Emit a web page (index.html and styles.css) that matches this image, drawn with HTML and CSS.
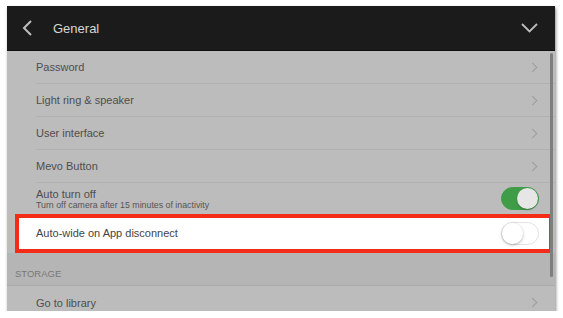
FILE: index.html
```html
<!DOCTYPE html>
<html lang="en">

<head>
    <meta charset="UTF-8">
    <meta name="viewport" content="width=device-width, initial-scale=1.0">
    <title>General - Settings</title>
    <link rel="stylesheet" href="styles.css">
</head>

<body>
    <div class="frame">
        <header class="topbar">
            <svg class="back" width="11" height="16" viewBox="0 0 11 16">
                <path d="M9 1 L2 8 L9 15" fill="none" stroke="#bdbdbd" stroke-width="2" />
            </svg>
            <h1>General</h1>
            <svg class="collapse" width="17" height="10" viewBox="0 0 17 10">
                <path d="M1 1 L8.5 8.5 L16 1" fill="none" stroke="#bdbdbd" stroke-width="1.8" />
            </svg>
        </header>

        <ul class="settings">
            <li class="row">
                <span class="label">Password</span>
                <span class="chevron"></span>
            </li>
            <li class="row">
                <span class="label">Light ring &amp; speaker</span>
                <span class="chevron"></span>
            </li>
            <li class="row">
                <span class="label">User interface</span>
                <span class="chevron"></span>
            </li>
            <li class="row">
                <span class="label">Mevo Button</span>
                <span class="chevron"></span>
            </li>
            <li class="row row-tall">
                <div class="text">
                    <span class="label">Auto turn off</span>
                    <span class="hint">Turn off camera after 15 minutes of inactivity</span>
                </div>
                <span class="toggle on"></span>
            </li>
            <li class="row row-marked">
                <span class="label">Auto-wide on App disconnect</span>
                <span class="toggle"></span>
            </li>
            <li class="section">STORAGE</li>
            <li class="row row-last">
                <span class="label">Go to library</span>
                <span class="chevron"></span>
            </li>
        </ul>

        <div class="scrollbar"></div>
    </div>
</body>

</html>
```

FILE: styles.css
```css
body {
    font-family: "Liberation Sans", Arial, sans-serif;
    background-color: #fff;
    margin: 0;
    padding: 0;
}

.frame {
    position: relative;
    width: 548px;
    height: 305px;
    margin: 6px 0 0 7px;
    background-color: #bcbcbc;
    overflow: hidden;
    box-shadow: 1px 2px 3px rgba(0, 0, 0, 0.45);
}

.topbar {
    display: flex;
    align-items: center;
    height: 44px;
    padding: 0 17px 0 15px;
    background-color: #1b1b1b;
    border-bottom: 1px solid #0f0f0f;
}

.topbar h1 {
    flex: 1;
    margin: 0 0 0 20px;
    font-size: 13px;
    font-weight: normal;
    color: #d6d6d6;
}

.settings {
    list-style: none;
    margin: 0;
    padding: 0;
}

.row {
    display: flex;
    align-items: center;
    justify-content: space-between;
    box-sizing: border-box;
    height: 33px;
    margin-left: 29px;
    padding-right: 16px;
    border-bottom: 1px solid #b1b1b1;
}

.label {
    font-size: 11px;
    color: #4e4e4e;
}

.text {
    display: flex;
    flex-direction: column;
    padding-top: 1px;
}

.hint {
    font-size: 8.8px;
    color: #555;
    margin-top: 0;
}

.row-tall {
    height: 31px;
    border-bottom: none;
}

.row-marked {
    height: 39px;
    margin: 0 2px 0 8px;
    padding: 0 10px 0 17px;
    background-color: #fff;
    border: 4px solid #f42b16;
}

.row-marked .label {
    color: #444;
    margin-top: -2px;
}

.row-last {
    margin-left: 0;
    padding-left: 29px;
    border-bottom: none;
}

.section {
    box-sizing: border-box;
    height: 33px;
    padding: 15px 0 0 8px;
    font-size: 9.5px;
    color: #787878;
    background-color: #b5b5b5;
    border-bottom: 1px solid #ababab;
}

.chevron {
    width: 6px;
    height: 6px;
    margin-right: 3px;
    border-top: 1.5px solid #9c9c9c;
    border-right: 1.5px solid #9c9c9c;
    transform: rotate(45deg);
}

.toggle {
    position: relative;
    box-sizing: border-box;
    width: 38px;
    height: 23px;
    border-radius: 12px;
    background-color: #fff;
    border: 1px solid #e2e2e2;
}

.toggle::after {
    content: "";
    position: absolute;
    top: 0;
    left: 0;
    width: 21px;
    height: 21px;
    border-radius: 50%;
    background-color: #fff;
    box-shadow: 0 1px 3px rgba(0, 0, 0, 0.3);
}

.toggle.on {
    background-color: #3f9d48;
    border-color: #3f9d48;
}

.toggle.on::after {
    left: 15px;
    background-color: #e6e6e6;
    box-shadow: 0 1px 2px rgba(0, 0, 0, 0.25);
}

.scrollbar {
    position: absolute;
    top: 47px;
    left: 543px;
    width: 3px;
    height: 224px;
    border-radius: 2px;
    background-color: #7e7e7e;
}
```
